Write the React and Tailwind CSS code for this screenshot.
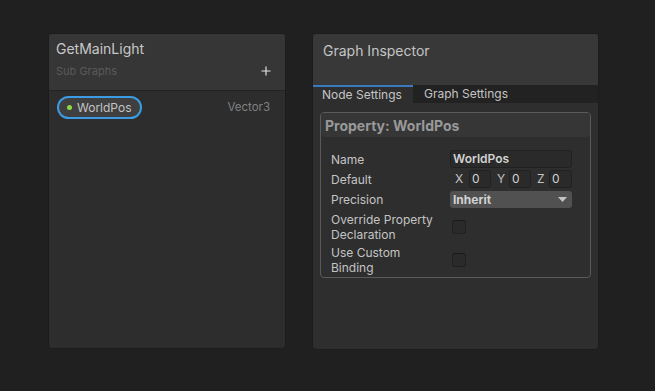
import { Plus } from 'lucide-react'

const FUENTE = { fontFamily: 'Inter, "Noto Sans", sans-serif' }

function Campo({ children, className = '' }) {
  return (
    <div
      className={`h-[18px] rounded-[3px] bg-[#2a2a2a] border border-[#212121] px-[2px] flex items-center text-[12px] text-[#d2d2d2] ${className}`}
    >
      {children}
    </div>
  )
}

function Casilla() {
  return <div className="w-[14px] h-[14px] rounded-[3px] bg-[#2a2a2a] border border-[#202020] border-t-[#191919]" />
}

function Fila({ etiqueta, children, alto = 'h-[20px]' }) {
  return (
    <div className={`flex items-center ${alto}`}>
      <div className="w-[121px] pr-[16px] text-[12px] leading-[15px] text-[#c4c4c4]">{etiqueta}</div>
      <div className="flex-1">{children}</div>
    </div>
  )
}

export default function App() {
  return (
    <div className="w-[655px] h-[391px] bg-[#202020] flex items-start gap-[26px] pl-[48px] pt-[33px]" style={FUENTE}>
      {/* Blackboard */}
      <div className="w-[238px] h-[316px] rounded-[4px] bg-[#2d2d2d] border border-[#1c1c1c] overflow-hidden flex flex-col">
        <div className="h-[57px] bg-[#363636] border-b border-[#232323] px-[7px] pt-[7px] relative">
          <div className="text-[14px] leading-[16px] text-[#c8c8c8]">GetMainLight</div>
          <div className="text-[11px] leading-[13px] text-[#5a5a5a] mt-[8px]">Sub Graphs</div>
          <Plus className="absolute right-[12px] top-[30px] text-[#e6e6e6]" size={14} strokeWidth={2} />
        </div>
        <div className="flex items-center justify-between pl-[8px] pr-[15px] pt-[5px]">
          <div className="h-[23px] rounded-full border-2 border-[#3b9ce3] bg-[#3f3f3f] flex items-center pl-[8px] pr-[8px] gap-[5px]">
            <span className="w-[5px] h-[5px] rounded-full bg-[#8ed743]" />
            <span className="text-[12px] text-[#c4c4c4]">WorldPos</span>
          </div>
          <span className="text-[11.5px] text-[#808080]">Vector3</span>
        </div>
      </div>

      {/* Graph Inspector */}
      <div className="w-[287px] h-[317px] rounded-[4px] bg-[#2e2e2e] border border-[#1c1c1c] overflow-hidden flex flex-col">
        <div className="h-[51px] bg-[#383838] px-[10px] pt-[9px]">
          <div className="text-[14px] leading-[16px] text-[#c4c4c4]">Graph Inspector</div>
        </div>
        <div className="h-[18px] bg-[#222222] flex text-[12px]">
          <div className="w-[100px] bg-[#2e2e2e] border-t-2 border-[#3a79bb] flex items-center pl-[9px] text-[#c4c4c4]">
            Node Settings
          </div>
          <div className="flex items-center pl-[11px] text-[#c4c4c4]">Graph Settings</div>
        </div>
        <div className="px-[7px] pt-[9px]">
          <div className="rounded-[4px] border border-[#5a5a5a] bg-[#2e2e2e] pb-[1px]">
            <div className="h-[24px] bg-[#363636] rounded-t-[3px] rounded-b-[4px] flex items-center px-[4px] text-[14px] font-bold text-[#999999]">
              Property: WorldPos
            </div>
            <div className="pl-[10px] pr-[18px] pt-[12px] flex flex-col">
              <Fila etiqueta="Name">
                <Campo className="w-[122px] font-semibold">WorldPos</Campo>
              </Fila>
              <Fila etiqueta="Default">
                <div className="flex items-center text-[12px] text-[#c4c4c4]">
                  <span className="w-[17px] pl-[3px]">X</span>
                  <Campo className="w-[22px]">0</Campo>
                  <span className="w-[18px] pl-[6px]">Y</span>
                  <Campo className="w-[22px]">0</Campo>
                  <span className="w-[18px] pl-[6px]">Z</span>
                  <Campo className="w-[23px]">0</Campo>
                </div>
              </Fila>
              <Fila etiqueta="Precision" alto="h-[21px]">
                <div className="w-[122px] h-[17px] rounded-[3px] bg-[#515151] flex items-center justify-between px-[3px] text-[12px] font-bold text-[#d2d2d2]">
                  Inherit
                  <svg width="9" height="5" viewBox="0 0 9 5" className="mr-[2px]">
                    <path d="M0 0h9L4.5 5z" fill="#c4c4c4" />
                  </svg>
                </div>
              </Fila>
              <Fila etiqueta="Override Property Declaration" alto="h-[33px]">
                <Casilla />
              </Fila>
              <Fila etiqueta="Use Custom Binding" alto="h-[33px]">
                <Casilla />
              </Fila>
            </div>
          </div>
        </div>
      </div>
    </div>
  )
}
